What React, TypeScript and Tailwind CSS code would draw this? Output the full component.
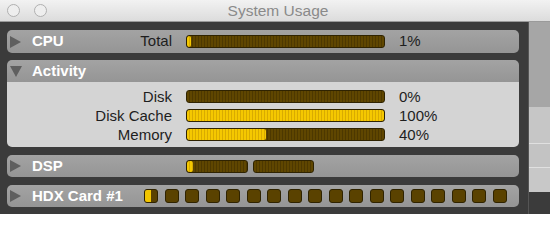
const font = { fontFamily: '"Liberation Sans", Arial, sans-serif' };

function Triangle({ open }: { open?: boolean }) {
  return (
    <div className="w-[25px] flex items-center pl-[3px]">
      {open ? (
        <svg width="12" height="11" viewBox="0 0 12 11">
          <polygon points="0,0 12,0 6,11" fill="#5f5f5f" />
        </svg>
      ) : (
        <svg width="11" height="12" viewBox="0 0 11 12">
          <polygon points="0,0 11,6 0,12" fill="#5f5f5f" />
        </svg>
      )}
    </div>
  );
}

function Bar({ width, fill }: { width: number; fill: number }) {
  return (
    <div
      className="h-[13px] rounded-[3px] border border-[#2f2300] overflow-hidden flex bg-[repeating-linear-gradient(90deg,#5f4600_0px,#5f4600_2px,#4d3800_2px,#4d3800_3px)]"
      style={{ width }}
    >
      {fill > 0 && (
        <div
          className="h-full rounded-[2px] bg-[repeating-linear-gradient(90deg,#f5c800_0px,#f5c800_2px,#d9ab00_2px,#d9ab00_3px)]"
          style={{ width: fill }}
        />
      )}
    </div>
  );
}

const activity = [
  { label: 'Disk', fill: 0, pct: '0%' },
  { label: 'Disk Cache', fill: 197, pct: '100%' },
  { label: 'Memory', fill: 79, pct: '40%' },
];

export default function App() {
  return (
    <div className="w-[550px] h-[214px] overflow-hidden flex flex-col bg-[#3b3b3b]" style={font}>
      {/* Title bar */}
      <div className="h-[22px] relative flex items-center justify-center bg-gradient-to-b from-[#f2f2f2] to-[#dcdcdc] border-b border-[#9a9a9a]">
        <div className="absolute left-[7px] top-[4px] flex gap-[14px]">
          <div className="w-[13px] h-[13px] rounded-full border border-[#b0b0b0] bg-[#eeeeee]" />
          <div className="w-[13px] h-[13px] rounded-full border border-[#b0b0b0] bg-[#eeeeee]" />
        </div>
        <span className="text-[15.5px] text-[#8a8a8a] leading-none ml-[6px]">System Usage</span>
      </div>

      <div className="flex flex-1">
        {/* Main area */}
        <div className="w-[528px] pl-[7px] pr-[9px] pt-[8px] flex flex-col">
          {/* CPU */}
          <div className="h-[23px] rounded-[5px] bg-gradient-to-b from-[#a3a3a3] to-[#959595] flex items-center">
            <Triangle />
            <div className="w-[140px] flex justify-between items-center">
              <span className="text-[15px] font-bold text-white">CPU</span>
              <span className="text-[15px] text-[#1e1e1e]">Total</span>
            </div>
            <div className="ml-[14px]">
              <Bar width={199} fill={4} />
            </div>
            <span className="ml-[14px] text-[15px] text-[#1e1e1e]">1%</span>
          </div>

          {/* Activity */}
          <div className="mt-[7px] rounded-[5px] overflow-hidden flex flex-col">
            <div className="h-[22px] bg-gradient-to-b from-[#a3a3a3] to-[#959595] flex items-center">
              <Triangle open />
              <span className="text-[15px] font-bold text-white">Activity</span>
            </div>
            <div className="h-[65px] bg-[#d4d4d4] pt-[8px] flex flex-col gap-[6px]">
              {activity.map((row) => (
                <div key={row.label} className="h-[13px] flex items-center">
                  <span className="w-[165px] text-right text-[15px] text-[#1e1e1e] leading-none">{row.label}</span>
                  <div className="ml-[14px]">
                    <Bar width={199} fill={row.fill} />
                  </div>
                  <span className="ml-[14px] text-[15px] text-[#1e1e1e] leading-none">{row.pct}</span>
                </div>
              ))}
            </div>
          </div>

          {/* DSP */}
          <div className="mt-[8px] h-[22px] rounded-[5px] bg-gradient-to-b from-[#a3a3a3] to-[#959595] flex items-center">
            <Triangle />
            <span className="w-[154px] text-[15px] font-bold text-white">DSP</span>
            <div className="flex gap-[5px]">
              <Bar width={62} fill={6} />
              <Bar width={61} fill={0} />
            </div>
          </div>

          {/* HDX */}
          <div className="mt-[8px] h-[22px] rounded-[5px] bg-gradient-to-b from-[#a3a3a3] to-[#959595] flex items-center">
            <Triangle />
            <span className="w-[112px] text-[15px] font-bold text-white">HDX Card #1</span>
            <div className="flex gap-[6.5px]">
              {Array.from({ length: 18 }).map((_, i) => (
                <div
                  key={i}
                  className="w-[14px] h-[14px] rounded-[3px] border border-[#2f2300] bg-[#5a4200] overflow-hidden"
                >
                  {i === 0 && <div className="w-[6px] h-full bg-[#f2c500]" />}
                </div>
              ))}
            </div>
          </div>
        </div>

        {/* Right strip */}
        <div className="flex-1 flex flex-col border-l border-[#555555]">
          <div className="h-[85px] bg-[#a6a6a6]" />
          <div className="h-[37px] bg-[#c6c6c6] border-b border-[#e0e0e0]" />
          <div className="h-[24px] bg-[#c3c3c3] border-b border-[#e0e0e0]" />
          <div className="h-[24px] bg-[#c8c8c8]" />
          <div className="flex-1 bg-[#3b3b3b]" />
        </div>
      </div>
    </div>
  );
}
